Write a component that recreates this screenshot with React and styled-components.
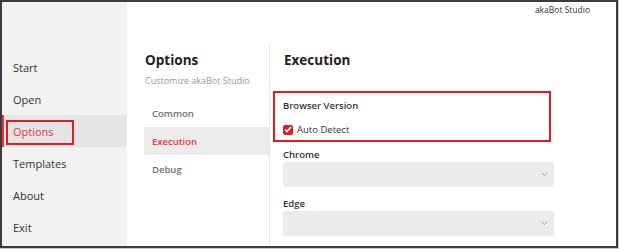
import React from "react";
import styled, { createGlobalStyle } from "styled-components";

const Global = createGlobalStyle`
  html, body { margin: 0; padding: 0; background: #c9c9c9; }
  body { font-family: "Open Sans", "Noto Sans", sans-serif; }
  * { box-sizing: border-box; }
`;

const Frame = styled.div`
  width: 618px;
  height: 248px;
  border: 2px solid #3b3b3b;
  background: #fff;
  display: flex;
  overflow: hidden;
`;

const Sidebar = styled.nav`
  width: 125px;
  background: #f2f2f2;
  display: flex;
  flex-direction: column;
  padding-top: 49px;
`;

const NavItem = styled.div`
  position: relative;
  height: 32px;
  display: flex;
  align-items: center;
  padding-left: 9px;
  font-size: 11px;
  color: ${(p) => (p.$active ? "#e8353b" : "#333")};
  background: ${(p) => (p.$active ? "#e5e5e5" : "transparent")};
  border-left: 2px solid ${(p) => (p.$active ? "#e8353b" : "transparent")};
`;

const Highlight = styled.span`
  position: absolute;
  left: ${(p) => p.$l}px;
  top: ${(p) => p.$t}px;
  width: ${(p) => p.$w}px;
  height: ${(p) => p.$h}px;
  border: 2px solid #e31b23;
  pointer-events: none;
`;

const Main = styled.div`
  flex: 1;
  display: flex;
  flex-direction: column;
`;

const TopBar = styled.div`
  height: 43px;
  display: flex;
  justify-content: flex-end;
  align-items: flex-start;
  padding: 2px 26px 0 0;
  font-size: 8.5px;
  color: #333;
`;

const Content = styled.div`
  flex: 1;
  display: flex;
`;

const OptionsPanel = styled.div`
  width: 143px;
  padding: 6px 0 0 17px;
  border-right: 1px solid #e6e6e6;
`;

const Title = styled.h2`
  margin: 0;
  padding-left: 1px;
  font-size: 13.5px;
  font-weight: 700;
  color: #222;
  line-height: 18px;
`;

const Subtitle = styled.div`
  font-size: 9px;
  color: #9a9a9a;
  margin-top: 5px;
  margin-bottom: 12px;
  padding-left: 1px;
  white-space: nowrap;
`;

const SubItem = styled.div`
  height: 28px;
  display: flex;
  align-items: center;
  padding-left: 8px;
  font-size: 9.5px;
  font-weight: 600;
  color: ${(p) => (p.$active ? "#e8353b" : "#707070")};
  background: ${(p) => (p.$active ? "#ececec" : "transparent")};
`;

const ExecPanel = styled.div`
  flex: 1;
  padding: 6px 0 0 13px;
  position: relative;
`;

const Section = styled.div`
  margin-top: 30px;
  width: 270px;
`;

const Label = styled.div`
  font-size: 9.5px;
  font-weight: 600;
  color: #333;
  line-height: 14px;
`;

const CheckRow = styled.label`
  display: flex;
  align-items: center;
  gap: 4px;
  margin-top: 10px;
  font-size: 9.5px;
  color: #333;
`;

const Check = styled.span`
  width: 10px;
  height: 10px;
  border-radius: 2px;
  background: #e31b23;
  display: inline-flex;
  align-items: center;
  justify-content: center;
`;

const Field = styled.div`
  margin-top: ${(p) => p.$mt}px;
`;

const Select = styled.div`
  height: 25px;
  width: 271px;
  background: #ebebeb;
  border-radius: 3px;
  display: flex;
  align-items: center;
  justify-content: flex-end;
  padding-right: 6px;
`;

const Chevron = () => (
  <svg width="7" height="5" viewBox="0 0 7 5">
    <path d="M1 1 L3.5 3.5 L6 1" fill="none" stroke="#a8a8b0" strokeWidth="1" />
  </svg>
);

export default function App() {
  return (
    <>
      <Global />
      <Frame>
        <Sidebar>
          <NavItem>Start</NavItem>
          <NavItem>Open</NavItem>
          <NavItem $active>
            Options
            <Highlight $l={2} $t={5} $w={68} $h={25} />
          </NavItem>
          <NavItem>Templates</NavItem>
          <NavItem>About</NavItem>
          <NavItem>Exit</NavItem>
        </Sidebar>
        <Main>
          <TopBar>akaBot Studio</TopBar>
          <Content>
            <OptionsPanel>
              <Title>Options</Title>
              <Subtitle>Customize akaBot Studio</Subtitle>
              <SubItem>Common</SubItem>
              <SubItem $active>Execution</SubItem>
              <SubItem>Debug</SubItem>
            </OptionsPanel>
            <ExecPanel>
              <Title>Execution</Title>
              <Highlight $l={3} $t={46} $w={278} $h={51} />
              <Section>
                <Label>Browser Version</Label>
                <CheckRow>
                  <Check>
                    <svg width="8" height="7" viewBox="0 0 8 7">
                      <path d="M1 3.5 L3 5.5 L7 1" fill="none" stroke="#fff" strokeWidth="1.6" />
                    </svg>
                  </Check>
                  Auto Detect
                </CheckRow>
              </Section>
              <Field $mt={12}>
                <Label>Chrome</Label>
                <Select><Chevron /></Select>
              </Field>
              <Field $mt={10}>
                <Label>Edge</Label>
                <Select><Chevron /></Select>
              </Field>
            </ExecPanel>
          </Content>
        </Main>
      </Frame>
    </>
  );
}
